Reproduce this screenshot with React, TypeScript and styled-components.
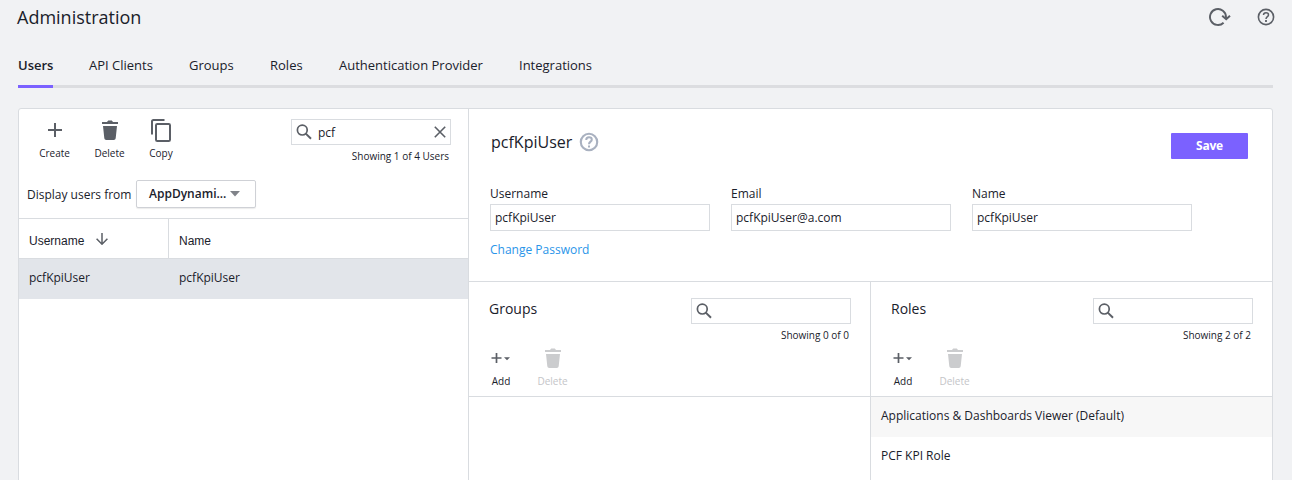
import React from "react";
import styled, { createGlobalStyle, css } from "styled-components";

const ink = "#1a212b";
const icon = "#5b5f66";
const line = "#d9dce0";

const GlobalStyle = createGlobalStyle`
  * { box-sizing: border-box; }
  body {
    margin: 0;
    background: #f1f2f4;
    color: ${ink};
    font-family: "Open Sans", "Liberation Sans", sans-serif;
    font-size: 12px;
    overflow: hidden;
  }
  svg { display: block; flex: none; }
`;

const Page = styled.div`
  height: 480px;
  padding: 0 19px 0 18px;
  display: flex;
  flex-direction: column;
  overflow: hidden;
`;

const TopBar = styled.header`
  height: 36px;
  display: flex;
  align-items: center;
  justify-content: space-between;
  margin: 0 -2px 0 -1px;
  padding-bottom: 2px;
  flex: none;
`;

const PageTitle = styled.h1`
  margin: 0;
  font-size: 18px;
  font-weight: 400;
  line-height: 24px;
`;

const TopActions = styled.div`
  display: flex;
  align-items: center;
  gap: 26px;
`;

const TabBar = styled.nav`
  height: 52px;
  display: flex;
  gap: 36px;
  border-bottom: 3px solid #dcdde0;
  flex: none;
`;

const Tab = styled.a<{ $active?: boolean; $width: number }>`
  width: ${(p) => p.$width}px;
  height: 52px;
  padding-top: 20px;
  font-size: 13px;
  line-height: 18px;
  white-space: nowrap;
  border-bottom: 3px solid transparent;
  ${(p) =>
    p.$active &&
    css`
      font-weight: 600;
      border-bottom-color: #7b61ff;
    `}
`;

const Panel = styled.main`
  margin-top: 20px;
  height: 400px;
  flex: none;
  display: flex;
  background: #fff;
  border: 1px solid ${line};
  border-radius: 3px;
  overflow: hidden;
`;

const UserList = styled.section`
  width: 450px;
  border-right: 1px solid ${line};
  flex: none;
`;

const ListHead = styled.div`
  height: 71px;
  padding: 10px 17px 0 8px;
  display: flex;
  justify-content: space-between;
`;

const Tools = styled.div`
  display: flex;
  margin-top: -1px;
`;

const ToolButton = styled.button<{ $width: number; $disabled?: boolean }>`
  width: ${(p) => p.$width}px;
  height: 42px;
  padding: 0;
  border: 0;
  background: none;
  display: flex;
  flex-direction: column;
  align-items: center;
  justify-content: flex-start;
  font: 10px/14px "Open Sans", sans-serif;
  color: ${(p) => (p.$disabled ? "#c4c5c8" : ink)};
`;

const IconSlot = styled.span`
  height: 24px;
  margin-bottom: 4px;
  display: flex;
  align-items: center;
`;

const SearchArea = styled.div`
  display: flex;
  flex-direction: column;
  align-items: flex-end;
`;

const SearchBox = styled.div`
  width: 160px;
  height: 26px;
  padding: 0 4px;
  border: 1px solid ${line};
  display: flex;
  align-items: center;
  gap: 6px;
`;

const Query = styled.span`
  flex: 1;
  padding-top: 1px;
  line-height: 18px;
`;

const Count = styled.span`
  margin: 4px 2px 0 0;
  font-size: 10px;
  line-height: 14px;
`;

const Filter = styled.div`
  height: 38px;
  padding: 0 0 10px 8px;
  display: flex;
  align-items: center;
  gap: 5px;
`;

const FilterLabel = styled.span`
  width: 104px;
  padding-top: 1px;
  white-space: nowrap;
  line-height: 18px;
`;

const Select = styled.button`
  width: 120px;
  height: 28px;
  padding: 0 15px 1px 12px;
  border: 1px solid #cfd1d6;
  border-radius: 2px;
  background: #fff;
  box-shadow: 0 1px 1px rgba(0, 0, 0, 0.08);
  display: flex;
  align-items: center;
  justify-content: space-between;
  font: 600 12px/18px "Open Sans", sans-serif;
  color: ${ink};
`;

const UserRow = styled.div<{ $head?: boolean }>`
  display: flex;
  height: 40px;
  line-height: 18px;
  background: #e2e5ea;
  ${(p) =>
    p.$head &&
    css`
      height: 41px;
      background: #fff;
      font-family: "Liberation Sans", sans-serif;
      border-top: 1px solid ${line};
      border-bottom: 1px solid ${line};
    `}
`;

const UserCell = styled.div<{ $first?: boolean; $head?: boolean }>`
  width: ${(p) => (p.$first ? 150 : 299)}px;
  padding: 0 10px ${(p) => (p.$head ? 0 : 2)}px;
  display: flex;
  align-items: center;
  gap: 12px;
  border-right: ${(p) => (p.$first && p.$head ? `1px solid ${line}` : "0")};
`;

const HeadText = styled.span`
  padding-top: 5px;
`;

const Details = styled.section`
  flex: 1;
`;

const Profile = styled.div`
  height: 173px;
  padding: 24px 24px 0 21px;
  border-bottom: 1px solid ${line};
`;

const ProfileHead = styled.div`
  height: 52px;
  display: flex;
  justify-content: space-between;
  align-items: flex-start;
`;

const ProfileName = styled.h2`
  margin: -3px 0 0 1px;
  display: flex;
  align-items: center;
  gap: 7px;
  font-size: 16px;
  font-weight: 400;
  line-height: 24px;
`;

const SaveButton = styled.button`
  width: 77px;
  height: 26px;
  padding: 0 0 1px;
  border: 0;
  border-radius: 1px;
  background: #7b61ff;
  color: #fff;
  font: 700 12px/18px "Open Sans", sans-serif;
  letter-spacing: -0.2px;
`;

const Fields = styled.div`
  display: flex;
  gap: 21px;
`;

const Field = styled.label`
  display: block;
  width: 220px;
  line-height: 18px;
`;

const FieldValue = styled.span`
  display: block;
  height: 27px;
  margin-top: 1px;
  padding: 4px;
  border: 1px solid ${line};
`;

const PasswordLink = styled.a`
  display: block;
  margin-top: 10px;
  line-height: 18px;
  color: #2a95e9;
`;

const Lists = styled.div`
  display: flex;
  height: 220px;
`;

const Membership = styled.div<{ $last?: boolean }>`
  width: ${(p) => (p.$last ? 401 : 402)}px;
  flex: none;
  border-right: ${(p) => (p.$last ? "0" : `1px solid ${line}`)};
`;

const MembershipHead = styled.div`
  height: 115px;
  padding: 16px 19px 0 20px;
  border-bottom: 1px solid ${line};
`;

const MembershipTop = styled.div`
  height: 48px;
  display: flex;
  justify-content: space-between;
`;

const MembershipTitle = styled.h3`
  margin: 0;
  font-size: 14px;
  font-weight: 400;
  line-height: 22px;
`;

const MembershipTools = styled.div`
  display: flex;
  gap: 24px;
`;

const RoleRow = styled.div<{ $shaded?: boolean }>`
  height: 40px;
  padding: 10px;
  line-height: 18px;
  background: ${(p) => (p.$shaded ? "#f7f7f7" : "#fff")};
`;

const RefreshIcon = () => (
  <svg width="22" height="20" viewBox="0 0 22 20" fill="none" stroke={icon} strokeWidth="1.9">
    <path d="M14.6 15.7A8 8 0 1 1 17 10V12" />
    <path d="M13.2 8.8L17.2 12.2L21 8.8" strokeWidth="2" />
  </svg>
);

const HelpIcon = ({ size, color, bold }: { size: number; color: string; bold?: boolean }) => (
  <svg width={size} height={size} viewBox="0 0 18 18" fill="none" stroke={color}>
    <circle cx="9" cy="9" r={bold ? 7.4 : 7.6} strokeWidth={bold ? 1.9 : 1.6} />
    <path d="M6.5 7.1C6.5 5.6 7.6 4.8 9 4.8s2.5.8 2.5 2.1C11.5 8.7 9 8.7 9 11" strokeWidth={bold ? 1.8 : 1.5} />
    <path d="M9 12.1v1.8" strokeWidth="1.8" />
  </svg>
);

const PlusIcon = () => (
  <svg width="14" height="14" viewBox="0 0 14 14" stroke={icon} strokeWidth="2">
    <path d="M7 0v14M0 7h14" />
  </svg>
);

const AddIcon = () => (
  <svg width="20" height="12" viewBox="0 0 20 12">
    <path d="M5.5 1v10M.5 6h10" stroke={icon} strokeWidth="1.7" />
    <path d="M13 5.2h6l-3 3z" fill={icon} />
  </svg>
);

const TrashIcon = ({ color = icon }: { color?: string }) => (
  <svg width="16" height="20" viewBox="0 0 16 20" fill={color}>
    <path d="M0 2h5l1.2-1.6h3.6L11 2h5v2H0zM1 6h14l-1.3 12.2Q13.5 20 11.8 20H4.2Q2.5 20 2.3 18.2z" />
  </svg>
);

const CopyIcon = () => (
  <svg width="20" height="23" viewBox="0 0 20 23" fill="none" stroke={icon} strokeWidth="2">
    <path d="M1 15.5V2.5Q1 1 2.5 1H13.5" />
    <rect x="5" y="5" width="14" height="17" rx="1.3" />
  </svg>
);

const SearchIcon = () => (
  <svg width="16" height="16" viewBox="0 0 16 16" fill="none" stroke={icon}>
    <circle cx="6.3" cy="6.1" r="4.9" strokeWidth="1.7" />
    <path d="M9.8 9.6L15 14.8" strokeWidth="2" />
  </svg>
);

const ClearIcon = () => (
  <svg width="12" height="12" viewBox="0 0 12 12" stroke={icon} strokeWidth="1.6">
    <path d="M.8.8l10.4 10.4M11.2.8L.8 11.2" />
  </svg>
);

const SortIcon = () => (
  <svg width="12" height="12" viewBox="0 0 12 12" fill="none" stroke={icon} strokeWidth="1.5">
    <path d="M6 0v11M.6 5.8L6 11.2l5.4-5.4" />
  </svg>
);

const CaretIcon = () => (
  <svg width="10" height="6" viewBox="0 0 10 6">
    <path d="M0 0h10L5 5.5z" fill="#808389" />
  </svg>
);

const tabs = [
  { label: "Users", width: 35 },
  { label: "API Clients", width: 64 },
  { label: "Groups", width: 45 },
  { label: "Roles", width: 33 },
  { label: "Authentication Provider", width: 144 },
  { label: "Integrations", width: 74 },
];

const fields = [
  { label: "Username", value: "pcfKpiUser" },
  { label: "Email", value: "pcfKpiUser@a.com" },
  { label: "Name", value: "pcfKpiUser" },
];

function MembershipPanel({ title, count, rows, last }: { title: string; count: string; rows: string[]; last?: boolean }) {
  return (
    <Membership $last={last}>
      <MembershipHead>
        <MembershipTop>
          <MembershipTitle>{title}</MembershipTitle>
          <SearchArea>
            <SearchBox>
              <SearchIcon />
            </SearchBox>
            <Count>{count}</Count>
          </SearchArea>
        </MembershipTop>
        <MembershipTools>
          <ToolButton $width={24}>
            <IconSlot><AddIcon /></IconSlot>
            Add
          </ToolButton>
          <ToolButton $width={31} $disabled>
            <IconSlot><TrashIcon color="#cbccce" /></IconSlot>
            Delete
          </ToolButton>
        </MembershipTools>
      </MembershipHead>
      {rows.map((row, i) => (
        <RoleRow key={row} $shaded={i % 2 === 0}>{row}</RoleRow>
      ))}
    </Membership>
  );
}

export default function App() {
  return (
    <>
      <GlobalStyle />
      <Page>
        <TopBar>
          <PageTitle>Administration</PageTitle>
          <TopActions>
            <RefreshIcon />
            <HelpIcon size={18} color={icon} />
          </TopActions>
        </TopBar>
        <TabBar>
          {tabs.map((tab, i) => (
            <Tab key={tab.label} $width={tab.width} $active={i === 0}>{tab.label}</Tab>
          ))}
        </TabBar>
        <Panel>
          <UserList>
            <ListHead>
              <Tools>
                <ToolButton $width={55}>
                  <IconSlot><PlusIcon /></IconSlot>
                  Create
                </ToolButton>
                <ToolButton $width={55}>
                  <IconSlot><TrashIcon /></IconSlot>
                  Delete
                </ToolButton>
                <ToolButton $width={48}>
                  <IconSlot><CopyIcon /></IconSlot>
                  Copy
                </ToolButton>
              </Tools>
              <SearchArea>
                <SearchBox>
                  <SearchIcon />
                  <Query>pcf</Query>
                  <ClearIcon />
                </SearchBox>
                <Count>Showing 1 of 4 Users</Count>
              </SearchArea>
            </ListHead>
            <Filter>
              <FilterLabel>Display users from</FilterLabel>
              <Select>
                AppDynami...
                <CaretIcon />
              </Select>
            </Filter>
            <UserRow $head>
              <UserCell $first $head>
                <HeadText>Username</HeadText>
                <SortIcon />
              </UserCell>
              <UserCell $head>
                <HeadText>Name</HeadText>
              </UserCell>
            </UserRow>
            <UserRow>
              <UserCell $first>pcfKpiUser</UserCell>
              <UserCell>pcfKpiUser</UserCell>
            </UserRow>
          </UserList>
          <Details>
            <Profile>
              <ProfileHead>
                <ProfileName>
                  pcfKpiUser
                  <HelpIcon size={20} color="#a9b1c0" bold />
                </ProfileName>
                <SaveButton>Save</SaveButton>
              </ProfileHead>
              <Fields>
                {fields.map((field) => (
                  <Field key={field.label}>
                    {field.label}
                    <FieldValue>{field.value}</FieldValue>
                  </Field>
                ))}
              </Fields>
              <PasswordLink>Change Password</PasswordLink>
            </Profile>
            <Lists>
              <MembershipPanel title="Groups" count="Showing 0 of 0" rows={[]} />
              <MembershipPanel
                title="Roles"
                count="Showing 2 of 2"
                rows={["Applications & Dashboards Viewer (Default)", "PCF KPI Role"]}
                last
              />
            </Lists>
          </Details>
        </Panel>
      </Page>
    </>
  );
}
